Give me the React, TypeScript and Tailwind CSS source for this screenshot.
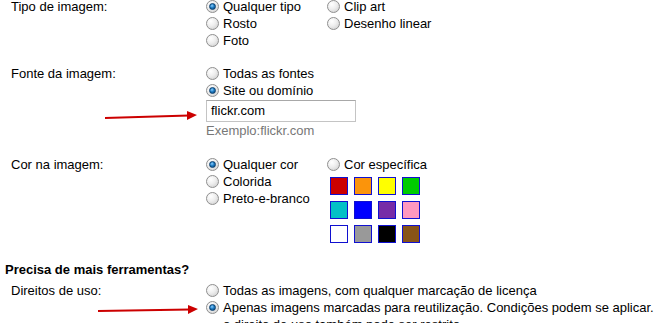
import React from 'react';

const Radio = ({ checked = false }: { checked?: boolean }) => (
  <span className="relative inline-flex h-[13px] w-[13px] shrink-0 items-center justify-center rounded-full border border-[#8f8f8f] bg-[radial-gradient(circle_at_35%_30%,#ffffff_0%,#eeeeee_45%,#c9c9c9_100%)]">
    {checked && (
      <span className="h-[7px] w-[7px] rounded-full border border-[#0b3f6e] bg-[radial-gradient(circle_at_40%_35%,#8fd0ff_0%,#1d7cc4_45%,#083d6b_100%)]" />
    )}
  </span>
);

const Option = ({ label, checked }: { label: string; checked?: boolean }) => (
  <div className="flex h-[17px] items-center gap-[4px] whitespace-nowrap">
    <Radio checked={checked} />
    <span>{label}</span>
  </div>
);

const Label = ({ children }: { children: React.ReactNode }) => (
  <div className="flex h-[17px] w-[201px] shrink-0 items-center pl-[6px]">{children}</div>
);

const swatches = [
  '#cc0000', '#fb940b', '#ffff00', '#00cc00',
  '#03c0c6', '#0000ff', '#762ca7', '#ff98bf',
  '#ffffff', '#999999', '#000000', '#885418',
];

export default function App() {
  return (
    <div className="relative h-[323px] w-[660px] overflow-hidden bg-white pl-[5px] font-['Liberation_Sans',Arial,sans-serif] text-[13px] text-black">
      {/* Tipo de imagem */}
      <div className="-mt-[2px] flex">
        <Label>Tipo de imagem:</Label>
        <div className="flex">
          <div className="w-[121px]">
            <Option label="Qualquer tipo" checked />
            <Option label="Rosto" />
            <Option label="Foto" />
          </div>
          <div>
            <Option label="Clip art" />
            <Option label="Desenho linear" />
          </div>
        </div>
      </div>

      {/* Fonte da imagem */}
      <div className="mt-[16px] flex">
        <Label>Fonte da imagem:</Label>
        <div>
          <Option label="Todas as fontes" />
          <Option label="Site ou domínio" checked />
          <div className="mt-[1px] flex h-[22px] w-[150px] items-center border border-[#c4c4c4] border-t-[#a8a8a8] px-[4px]">
            flickr.com
          </div>
          <div className="flex h-[17px] items-center text-[#777]">Exemplo:flickr.com</div>
        </div>
      </div>

      {/* Cor na imagem */}
      <div className="mt-[17px] flex">
        <Label>Cor na imagem:</Label>
        <div className="flex">
          <div className="w-[121px]">
            <Option label="Qualquer cor" checked />
            <Option label="Colorida" />
            <Option label="Preto-e-branco" />
          </div>
          <div>
            <Option label="Cor específica" />
            <div className="mt-[4px] ml-[3px] grid grid-cols-[repeat(4,18px)] gap-[6px]">
              {swatches.map((c) => (
                <div key={c} className="h-[18px] w-[18px] border border-[#1010d0]" style={{ backgroundColor: c }} />
              ))}
            </div>
          </div>
        </div>
      </div>

      {/* Precisa de mais ferramentas */}
      <div className="mt-[18px] flex h-[17px] items-center font-bold">Precisa de mais ferramentas?</div>
      <div className="mt-[4px] flex">
        <Label>Direitos de uso:</Label>
        <div>
          <Option label="Todas as imagens, com qualquer marcação de licença" />
          <Option label="Apenas imagens marcadas para reutilização. Condições podem se aplicar." checked />
          <div className="flex h-[17px] items-center pl-[17px]">o direito de uso também pode ser restrito</div>
        </div>
      </div>

      {/* annotation arrows */}
      <svg className="pointer-events-none absolute left-0 top-0" width="660" height="323">
        <line x1="105" y1="118" x2="189" y2="115.5" stroke="#cc0000" strokeWidth="2" />
        <polygon points="187,111 197,115 187,120" fill="#cc0000" />
        <line x1="98" y1="311" x2="190" y2="309.5" stroke="#cc0000" strokeWidth="2" />
        <polygon points="188,305 198,309 188,314" fill="#cc0000" />
      </svg>
    </div>
  );
}
